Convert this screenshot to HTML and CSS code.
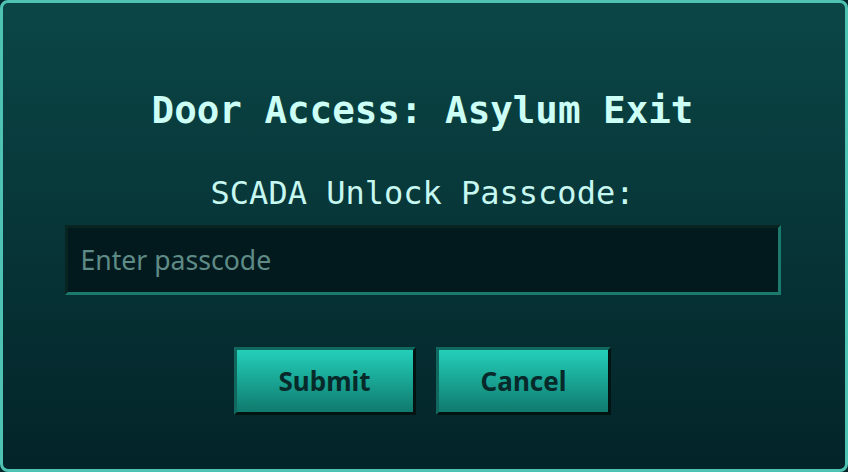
FILE: index.html
```html
<!DOCTYPE html>
<html lang="en">
<head>
  <meta charset="UTF-8">
  <meta name="viewport" content="width=device-width, initial-scale=1">
  <title>Door Access</title>
  <link rel="stylesheet" href="styles.css">
</head>
<body>
  <div class="panel">
    <h1 class="title">Door Access: Asylum Exit</h1>
    <label class="prompt" for="passcode">SCADA Unlock Passcode:</label>
    <input type="password" id="passcode" class="passcode" placeholder="Enter passcode">
    <div class="actions">
      <button class="btn">Submit</button>
      <button class="btn">Cancel</button>
    </div>
  </div>
</body>
</html>
```

FILE: styles.css
```css
/* Terminal-style access dialog */
body {
  margin: 0;
  background: #03262a;
}
.panel {
  box-sizing: border-box;
  height: 472px;
  border: 3px solid #4ec3b4;
  border-radius: 8px;
  background: linear-gradient(#0b4646, #032429);
  display: flex;
  flex-direction: column;
  align-items: center;
  padding: 85px 3px 0 0;
}
.title {
  margin: 0;
  font-family: "DejaVu Sans Mono", monospace;
  font-size: 37.5px;
  font-weight: bold;
  color: #ccfff6;
}
.prompt {
  margin-top: 42px;
  font-family: "DejaVu Sans Mono", monospace;
  font-size: 32px;
  color: #c6f7f0;
}
.passcode {
  box-sizing: border-box;
  width: 716px;
  height: 70px;
  margin-top: 13px;
  padding: 0 13px;
  border: 3px inset #1c7a6d;
  background: #021a1d;
  font-family: "Noto Sans", sans-serif;
  font-size: 26.6px;
  color: #c6f7f0;
  outline: none;
}
.passcode::placeholder {
  color: #5f8b87;
}
.actions {
  display: flex;
  gap: 20px;
  margin-top: 52px;
}
.btn {
  height: 68px;
  padding: 0 42px;
  border: 3px outset #11685e;
  background: linear-gradient(#24cfba, #0f7a6d);
  font-family: "Noto Sans", sans-serif;
  font-size: 26px;
  font-weight: bold;
  color: #07292a;
  cursor: pointer;
}
.btn:hover {
  background: linear-gradient(#2ee0ca, #138a7b);
}
```
